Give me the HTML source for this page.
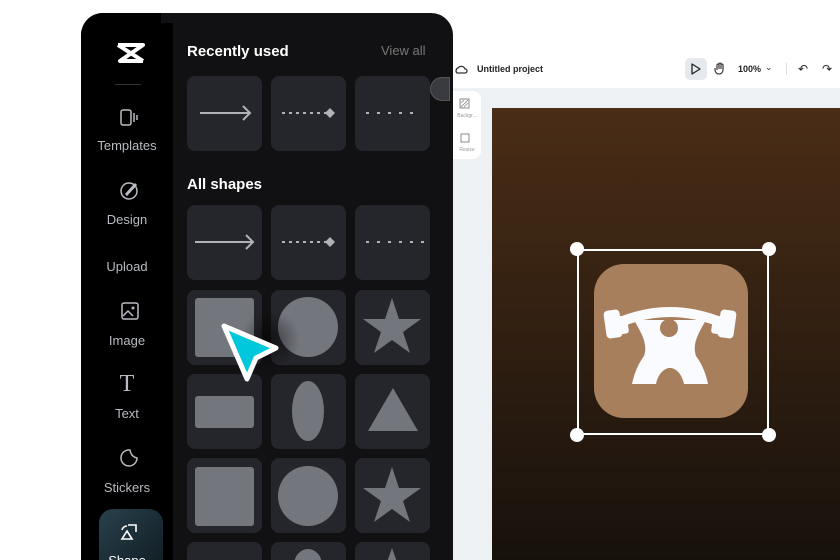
<!DOCTYPE html>
<html><head><meta charset="utf-8"><style>
*{margin:0;padding:0;box-sizing:border-box}
html,body{width:840px;height:560px;overflow:hidden;background:#fff}
body{font-family:"Liberation Sans",sans-serif}
#root{position:relative;width:840px;height:560px;overflow:hidden}
.abs{position:absolute}
.panel{left:81px;top:13px;width:372px;height:547px;background:#111113;border-radius:22px 22px 0 0;overflow:hidden}
.side{left:0;top:0;width:92px;height:560px;background:#000}
.nav{position:absolute;left:0;width:92px;text-align:center;color:#b8bcc2;font-size:13px}
.tile{position:absolute;width:75px;height:75px;background:#25262b;border-radius:8px}
.h{position:absolute;color:#fff;font-weight:bold;font-size:15px}
.g{fill:#74767e}
</style></head><body><div id="root">
<div class="abs" style="left:453px;top:88px;width:387px;height:472px;background:#eef1f4"></div>
<div class="abs" style="left:492px;top:108px;width:348px;height:452px;background:linear-gradient(#4a2d16,#17110c)"></div>
<div class="abs" style="left:453px;top:91px;width:28px;height:68px;background:#fff;border-radius:0 8px 8px 0"></div>
<div class="abs" style="left:453px;top:113px;width:28px;font-size:5px;color:#999;text-align:center">Backgr...</div>
<div class="abs" style="left:453px;top:147px;width:28px;font-size:5px;color:#999;text-align:center">Resize</div>
<svg class="abs" style="left:459px;top:98px" width="12" height="12"><rect x="1" y="1" width="9" height="9" fill="none" stroke="#888" stroke-width="1"/><path d="M2 9L9 2M2 5L5 2M5 9L9 5" stroke="#888" stroke-width=".8"/></svg>
<svg class="abs" style="left:459px;top:132px" width="12" height="12"><rect x="2" y="2" width="8" height="8" fill="none" stroke="#888" stroke-width="1"/></svg>
<svg class="abs" style="left:454px;top:63px" width="14" height="14"><path d="M3 10a3 3 0 0 1 1-5 4 4 0 0 1 7 1 2 2 0 0 1 0 4z" fill="none" stroke="#333" stroke-width="1.3"/></svg>
<div class="abs" style="left:477px;top:64px;font-size:9px;font-weight:bold;color:#222">Untitled project</div>
<div class="abs" style="left:685px;top:58px;width:22px;height:22px;background:#e6eaef;border-radius:5px"></div>
<svg class="abs" style="left:690px;top:63px" width="12" height="12"><path d="M2 1L10 6L2 11Z" fill="none" stroke="#222" stroke-width="1.3" stroke-linejoin="round"/></svg>
<svg class="abs" style="left:714px;top:62px" width="12" height="14"><path d="M3 8V3a1 1 0 0 1 2 0v4V2a1 1 0 0 1 2 0v5V3a1 1 0 0 1 2 0v5a4 4 0 0 1-8 0V6" fill="none" stroke="#222" stroke-width="1.1"/></svg>
<div class="abs" style="left:738px;top:64px;font-size:9px;font-weight:bold;color:#222">100%</div>
<div class="abs" style="left:765px;top:62px;font-size:9px;color:#333">⌄</div>
<div class="abs" style="left:786px;top:63px;width:1px;height:12px;background:#ddd"></div>
<div class="abs" style="left:798px;top:62px;font-size:12px;color:#222">↶</div>
<div class="abs" style="left:822px;top:62px;font-size:12px;color:#222">↷</div>
<div class="abs" style="left:577px;top:249px;width:192px;height:186px;border:2px solid #fff"></div>
<div class="abs" style="left:570px;top:242px;width:14px;height:14px;border-radius:50%;background:#fff"></div>
<div class="abs" style="left:762px;top:242px;width:14px;height:14px;border-radius:50%;background:#fff"></div>
<div class="abs" style="left:570px;top:428px;width:14px;height:14px;border-radius:50%;background:#fff"></div>
<div class="abs" style="left:762px;top:428px;width:14px;height:14px;border-radius:50%;background:#fff"></div>
<div class="abs" style="left:594px;top:264px;width:154px;height:154px;background:#a87f5d;border-radius:30px"></div>
<svg class="abs" style="left:594px;top:264px" width="154" height="154">
<g fill="#fafbff">
<path d="M26 58Q76 38 126 58" stroke="#fafbff" stroke-width="10" fill="none"/>
<path d="M40 56L112 56C104 70 98 80 102 92C108 100 112 110 114 120L90 120C88 110 82 104 76 104C70 104 64 110 62 120L38 120C40 110 44 100 50 92C54 80 48 70 40 56Z"/>
<rect x="11" y="46" width="16" height="28" rx="4" transform="rotate(-8 19 60)"/>
<rect x="22" y="52" width="12" height="18" rx="3" transform="rotate(-8 28 61)"/>
<rect x="125" y="46" width="16" height="28" rx="4" transform="rotate(8 133 60)"/>
<rect x="118" y="52" width="12" height="18" rx="3" transform="rotate(8 124 61)"/>
</g>
<circle cx="75" cy="64" r="9" fill="#a87f5d"/>
</svg>
<div class="abs panel">
<div class="abs side"></div>
<div class="abs" style="left:80px;top:0;width:12px;height:10px;background:#111113"></div>
<svg class="abs" style="left:35px;top:29px" width="30" height="22"><path d="M2 3H27L4 19H27M2 3L27 19" stroke="#fff" stroke-width="4" fill="none" stroke-linejoin="round"/></svg>
<div class="abs" style="left:34px;top:71px;width:26px;height:1px;background:#333"></div>
<svg class="abs" style="left:38px;top:95px" width="22" height="20"><rect x="2" y="2" width="10" height="15" rx="2" fill="none" stroke="#b8bcc2" stroke-width="1.5"/><path d="M15 5V14M18 7V12" stroke="#b8bcc2" stroke-width="1.5"/></svg>
<div class="nav" style="top:125px">Templates</div>
<svg class="abs" style="left:38px;top:167px" width="22" height="22"><circle cx="10" cy="11" r="8" fill="none" stroke="#b8bcc2" stroke-width="1.5"/><path d="M7 15L17 4" stroke="#b8bcc2" stroke-width="3"/></svg>
<div class="nav" style="top:199px">Design</div>
<div class="nav" style="top:246px">Upload</div>
<svg class="abs" style="left:39px;top:288px" width="20" height="20"><rect x="2" y="2" width="16" height="16" rx="2" fill="none" stroke="#b8bcc2" stroke-width="1.5"/><path d="M3 15L8 10L13 15" stroke="#b8bcc2" stroke-width="1.5" fill="none"/><circle cx="13" cy="7" r="1.5" fill="#b8bcc2"/></svg>
<div class="nav" style="top:320px">Image</div>
<div class="nav" style="top:358px;font-size:24px;font-family:'Liberation Serif',serif;color:#b8bcc2">T</div>
<div class="nav" style="top:393px">Text</div>
<svg class="abs" style="left:38px;top:434px" width="22" height="22"><path d="M18 11A8 8 0 1 1 11 3C12 8 14 10 18 11Z" fill="none" stroke="#b8bcc2" stroke-width="1.5"/></svg>
<div class="nav" style="top:467px">Stickers</div>
<div class="abs" style="left:18px;top:496px;width:64px;height:70px;border-radius:14px;background:linear-gradient(135deg,#28404c,#0f1a20)"></div>
<svg class="abs" style="left:38px;top:507px" width="22" height="22"><path d="M9 5H17V12M3 10A5 5 0 0 1 8 6M8 11L3 19H13Z" fill="none" stroke="#fff" stroke-width="1.6"/></svg>
<div class="nav" style="top:540px;color:#fff">Shape</div>
<div class="h" style="left:106px;top:30px">Recently used</div>
<div class="abs" style="left:300px;top:30px;color:#777;font-size:13px">View all</div>
<div class="h" style="left:106px;top:163px">All shapes</div>
<div class="abs" style="left:349px;top:64px;width:20px;height:24px;border-radius:12px 0 0 12px;background:#3a3b40;border:1px solid #555"></div>
</div>
<div class="tile" style="left:187px;top:76px"></div><div class="tile" style="left:271px;top:76px"></div><div class="tile" style="left:355px;top:76px"></div>
<div class="tile" style="left:187px;top:205px"></div><div class="tile" style="left:271px;top:205px"></div><div class="tile" style="left:355px;top:205px"></div>
<div class="tile" style="left:187px;top:290px"></div><div class="tile" style="left:271px;top:290px"></div><div class="tile" style="left:355px;top:290px"></div>
<div class="tile" style="left:187px;top:374px"></div><div class="tile" style="left:271px;top:374px"></div><div class="tile" style="left:355px;top:374px"></div>
<div class="tile" style="left:187px;top:458px"></div><div class="tile" style="left:271px;top:458px"></div><div class="tile" style="left:355px;top:458px"></div>
<div class="tile" style="left:187px;top:542px;height:18px;border-radius:8px 8px 0 0"></div><div class="tile" style="left:271px;top:542px;height:18px;border-radius:8px 8px 0 0"></div><div class="tile" style="left:355px;top:542px;height:18px;border-radius:8px 8px 0 0"></div>
<svg class="abs" style="left:0;top:0" width="453" height="560">
<g stroke="#b0b2b8" stroke-width="2" fill="none">
<path d="M200 113H250M243 106L250 113L243 120"/><path d="M195 242H253M246 235L253 242L246 249"/>
<path d="M282 113H328M282 242H330" stroke-dasharray="3 4"/>
<path d="M366 113H418M366 242H426" stroke-dasharray="3 8"/>
</g>
<path d="M330 108L335 113L330 118L325 113Z M330 237L335 242L330 247L325 242Z" fill="#b0b2b8"/>
<rect x="195" y="298" width="59" height="59" rx="3" class="g"/>
<circle cx="308" cy="327" r="30" class="g"/>
<path d="M392 298L399 319L421 319L403 332L410 353L392 340L374 353L381 332L363 319L385 319Z" class="g"/>
<rect x="195" y="396" width="59" height="32" rx="3" class="g"/>
<ellipse cx="308" cy="411" rx="16" ry="30" class="g"/>
<path d="M393 388L418 431L368 431Z" class="g"/>
<rect x="195" y="467" width="59" height="59" rx="3" class="g"/>
<circle cx="308" cy="496" r="30" class="g"/>
<path d="M392 467L399 488L421 488L403 501L410 522L392 509L374 522L381 501L363 488L385 488Z" class="g"/>
<ellipse cx="308" cy="565" rx="14" ry="16" class="g"/>
<path d="M392 548L398 565L386 565Z" class="g"/>
<defs><radialGradient id="sh"><stop offset="0" stop-color="#000" stop-opacity=".5"/><stop offset="1" stop-color="#000" stop-opacity="0"/></radialGradient></defs>
<circle cx="270" cy="340" r="30" fill="url(#sh)"/>
<path d="M224 326L276 348L256 358L247 379Z" fill="#00c8dc" stroke="#fff" stroke-width="5" stroke-linejoin="round"/>
</svg>
</div></body></html>
